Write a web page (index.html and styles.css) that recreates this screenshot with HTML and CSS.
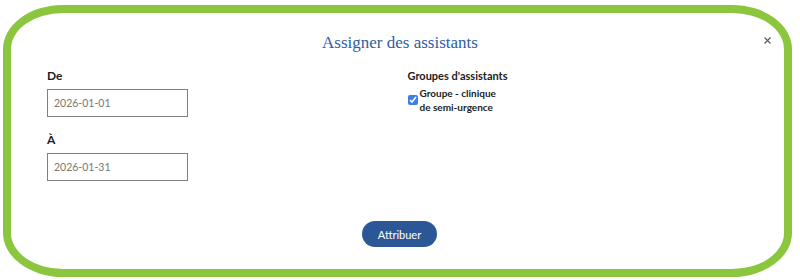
FILE: index.html
```html
<!doctype html>
<html>
<head>
<meta charset="utf-8">
<title>Assigner des assistants</title>
<link rel="stylesheet" href="styles.css">
</head>
<body>
    <div class="modal">
        <div class="modal-head">
            <span></span>
            <h1 class="modal-title">Assigner des assistants</h1>
            <button class="close" type="button" aria-label="Fermer">
                <svg width="7" height="7" viewBox="0 0 7 7"><path d="M0.5 0.5L6.5 6.5M6.5 0.5L0.5 6.5" stroke="#555" stroke-width="1.1" fill="none"/></svg>
            </button>
        </div>
        <form class="modal-body">
            <div class="col">
                <div class="field">
                    <label for="date_from">De</label>
                    <input id="date_from" type="text" value="2026-01-01">
                </div>
                <div class="field">
                    <label for="date_to">À</label>
                    <input id="date_to" type="text" value="2026-01-31">
                </div>
            </div>
            <div class="col">
                <div class="field">
                    <span class="label label-sm">Groupes d'assistants</span>
                    <div class="check">
                        <input id="grp_1" type="checkbox" checked>
                        <label for="grp_1">Groupe - clinique de semi-urgence</label>
                    </div>
                </div>
            </div>
        </form>
        <div class="modal-foot">
            <button class="btn" type="button">Attribuer</button>
        </div>
    </div>
</body>
</html>
```

FILE: styles.css
```css
html, body {
    margin: 0;
    padding: 0;
    background: #fff;
    font-family: Lato, "Open Sans", sans-serif;
}
.modal {
    box-sizing: border-box;
    width: 789px;
    height: 272px;
    margin: 5px 0 0 3px;
    border: 8px solid #8cc63f;
    border-radius: 60px / 44px;
    display: flex;
    flex-direction: column;
}
.modal-head {
    display: grid;
    grid-template-columns: 1fr auto 1fr;
    padding: 18px 13px 0 18px;
}
.modal-title {
    margin: 0;
    font-family: "Liberation Serif", serif;
    font-weight: normal;
    font-size: 17px;
    line-height: 24px;
    color: #2f5d9e;
}
.close {
    justify-self: end;
    align-self: start;
    margin-top: 6px;
    padding: 0;
    border: 0;
    background: none;
    width: 7px;
    height: 7px;
    line-height: 0;
}
.modal-body {
    display: grid;
    grid-template-columns: 1fr 1fr;
    gap: 20px;
    margin: 14px 0 0;
    padding: 0 36px;
}
.field {
    margin-bottom: 16px;
}
.field > label, .label {
    display: block;
    font-size: 12px;
    font-weight: bold;
    line-height: 14px;
    color: #222;
}
.label-sm {
    font-size: 11px;
}
.field input[type="text"] {
    display: block;
    box-sizing: border-box;
    width: 141px;
    height: 28px;
    margin-top: 6px;
    padding: 0 6px;
    border: 1px solid #7f7f88;
    border-radius: 0;
    font-family: Lato, sans-serif;
    font-size: 10.5px;
    color: #777;
}
.check {
    display: flex;
    align-items: center;
    margin-top: 3px;
}
.check input {
    width: 10px;
    height: 10px;
    margin: 0 2px 0 0;
    accent-color: #3d7fe6;
}
.check label {
    width: 84px;
    font-size: 10px;
    font-weight: bold;
    line-height: 14px;
    color: #222;
}
.modal-foot {
    margin-top: auto;
    padding: 0 0 22px 4px;
    text-align: center;
}
.btn {
    width: 75px;
    height: 26px;
    border: 0;
    border-radius: 13px;
    background: #2b5797;
    color: #fff;
    font-family: Lato, sans-serif;
    font-size: 11px;
}
```
